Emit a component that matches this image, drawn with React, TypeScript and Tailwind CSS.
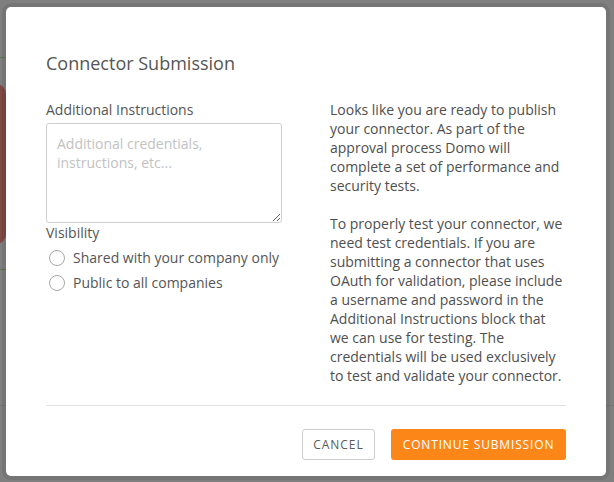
import React from 'react';

function Radio({ label }: { label: string }) {
  return (
    <label className="flex items-center h-[25px] pl-[3px] gap-[8px] cursor-pointer">
      <span className="w-4 h-4 rounded-full border border-[#a8a8a8] bg-white shrink-0" />
      <span>{label}</span>
    </label>
  );
}

export default function App() {
  return (
    <div
      className="relative w-[614px] h-[482px] bg-[#7f7f7f] overflow-hidden text-[#555]"
      style={{ fontFamily: '"Open Sans", "Liberation Sans", sans-serif' }}
    >
      {/* page behind the overlay */}
      <div className="absolute left-0 top-[57px] w-[8px] h-px bg-[#5d7a4f]" />
      <div className="absolute -left-[10px] top-[84px] w-[16px] h-[160px] rounded-r-[10px] bg-[#7f4a45]" />
      <div className="absolute left-0 top-[269px] w-[8px] h-px bg-[#5d7a4f]" />
      <div className="absolute left-0 right-0 top-[405px] h-px bg-[#757575]" />

      <div className="relative ml-[6px] mt-[7px] w-[600px] h-[469px] bg-white rounded-[5px] shadow-[0_0_0_4px_rgba(0,0,0,0.08)] px-10 pt-[43px]">
        <h1 className="text-[18px] leading-[26px] text-[#555]">Connector Submission</h1>

        <div className="grid grid-cols-2 gap-12 mt-[24px] text-[14px] leading-[19px]">
          <div>
            <div>Additional Instructions</div>
            <textarea
              className="block mt-1 w-[236px] h-[100px] border border-[#cfcfcf] rounded-[3px] px-[10px] py-[10px] text-[14px] leading-[19px] placeholder:text-[#c2c2c2] outline-none"
              placeholder="Additional credentials, instructions, etc..."
            />
            <div className="mb-[3px]">Visibility</div>
            <Radio label="Shared with your company only" />
            <Radio label="Public to all companies" />
          </div>
          <div className="text-[#4f4f4f]">
            <p>
              Looks like you are ready to publish your connector. As part of the approval process Domo will complete a
              set of performance and security tests.
            </p>
            <p className="mt-[19px]">
              To properly test your connector, we need test credentials. If you are submitting a connector that uses
              OAuth for validation, please include a username and password in the Additional Instructions block that we
              can use for testing. The credentials will be used exclusively to test and validate your connector.
            </p>
          </div>
        </div>

        <div className="h-px bg-[#e2e2e2] mt-[20px]" />

        <div className="flex justify-end gap-4 mt-[23px]">
          <button className="h-[31px] w-[73px] border border-[#cdcdcd] rounded-[3px] text-[12px] tracking-[0.08em] text-[#5a5a5a] bg-white">
            CANCEL
          </button>
          <button className="h-[31px] w-[175px] rounded-[3px] bg-[#fd8619] text-white text-[12px] tracking-[0.07em]">
            CONTINUE SUBMISSION
          </button>
        </div>
      </div>
    </div>
  );
}
